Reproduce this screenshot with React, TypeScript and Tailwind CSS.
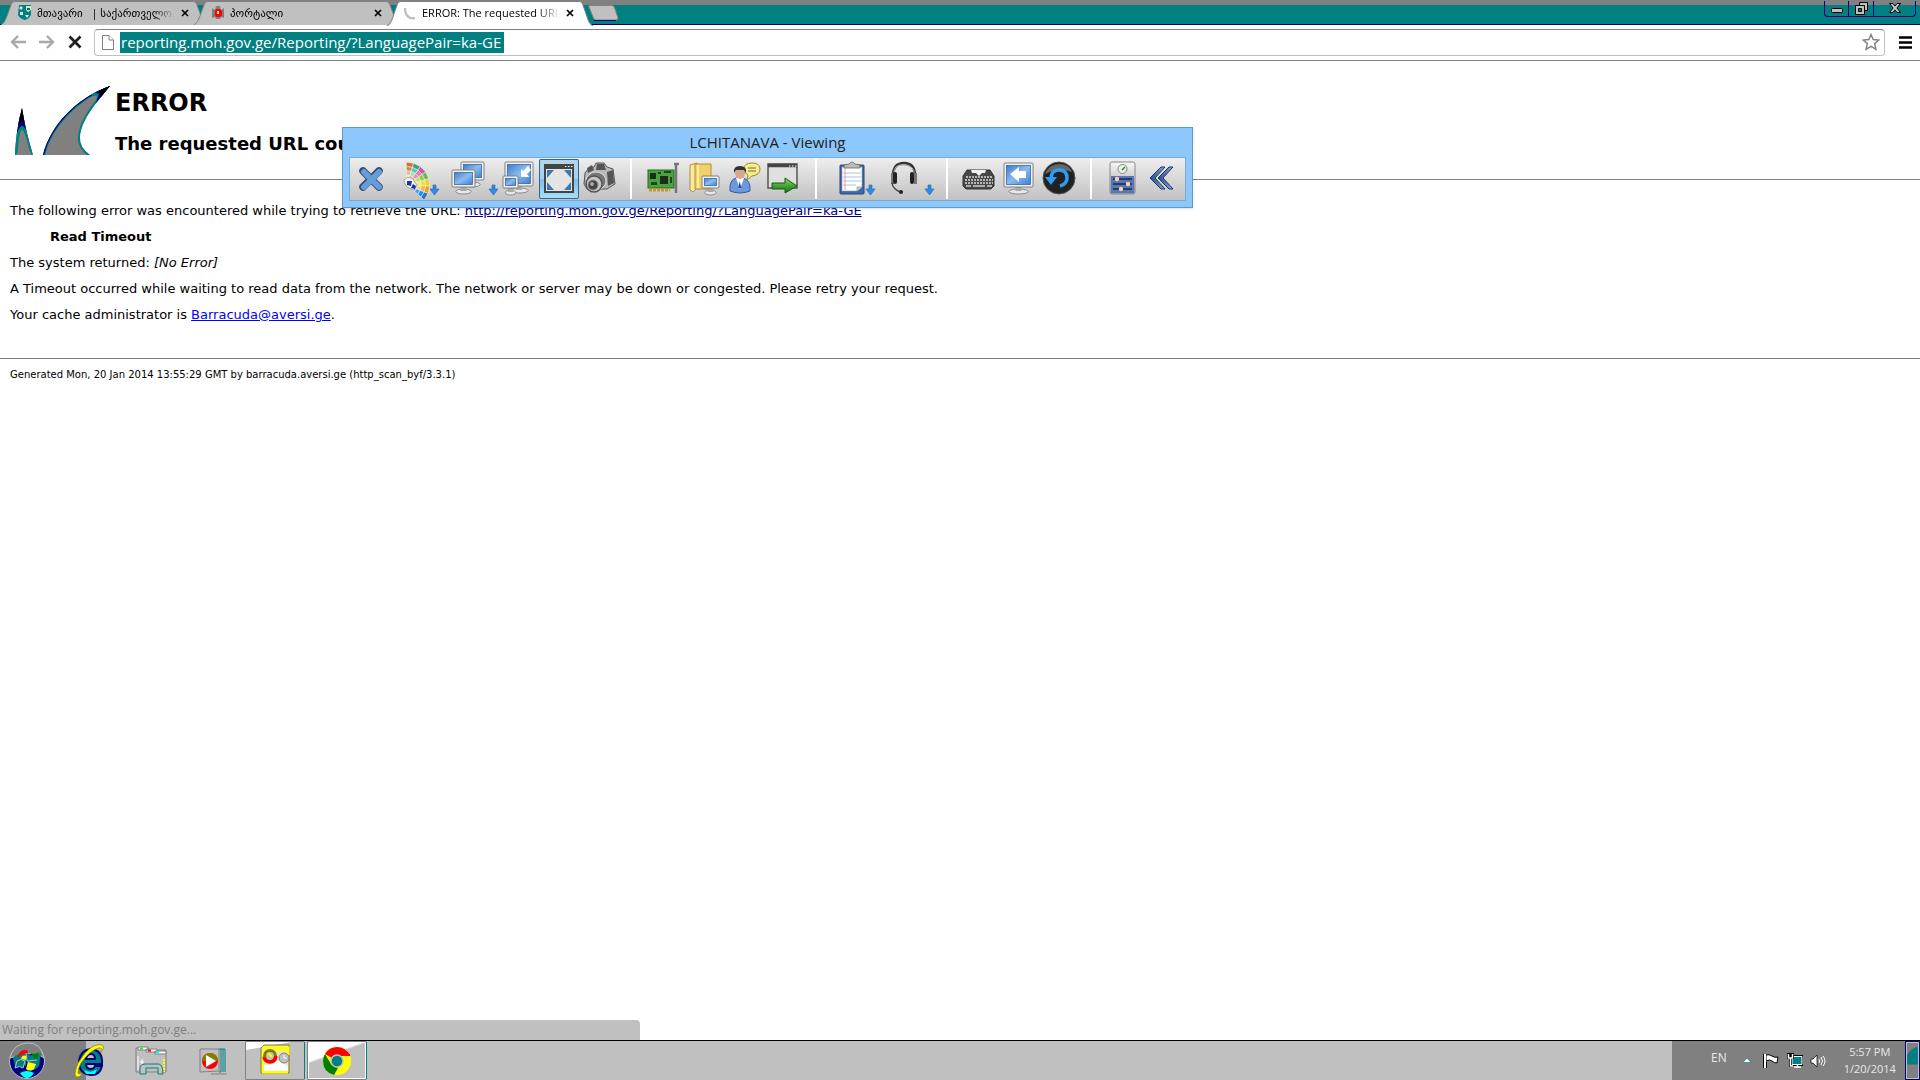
import type { ReactNode } from "react";
import clsx from "clsx";

type TabProps = {
  title: string;
  icon: ReactNode;
  active?: boolean;
};

function Tab({ title, icon, active }: TabProps) {
  const fill = active ? "#ffffff" : "#c0c0c0";

  return (
    <div className={clsx("flex h-6 shrink-0 -mr-[13px]", active && "relative h-[25px]")}>
      <svg viewBox="0 0 14 24" preserveAspectRatio="none" className="h-full w-3.5" aria-hidden="true">
        <path d="M0 24Q4 22 6 15L10 4Q11 0 14 0V24Z" fill={fill} />
        <path d="M0 24Q4 22 6 15L10 4Q11 0.5 14 0.5" fill="none" stroke="#808080" />
      </svg>
      <div
        className={clsx(
          "flex w-[178px] items-center border-t border-[#808080] pb-0.5 pl-[3px]",
          active ? "bg-white" : "bg-[#c0c0c0]"
        )}
      >
        {icon}
        <button
          type="button"
          className={clsx(
            "h-5 w-[138px] text-left text-[11px] leading-5 whitespace-pre [mask-image:linear-gradient(to_right,black_84%,transparent)]",
            active ? "ml-0.5" : "ml-[5px]"
          )}
        >
          {title}
        </button>
        <button type="button" aria-label="Close tab" className="ml-1.5">
          <svg viewBox="0 0 8 8" className="size-2" stroke="black" strokeWidth="1.7">
            <path d="M1 1L7 7M7 1L1 7" />
          </svg>
        </button>
      </div>
      <svg viewBox="0 0 14 24" preserveAspectRatio="none" className="h-full w-3.5" aria-hidden="true">
        <path d="M0 0Q3 0 4 4L8 15Q10 22 14 24H0Z" fill={fill} />
        <path d="M0 0.5Q3 0.5 4 4L8 15Q10 22 14 24" fill="none" stroke="#808080" />
      </svg>
    </div>
  );
}

function WindowButtons() {
  return (
    <div className="mr-1 ml-auto flex h-4 rounded-b border border-t-0 border-[#000080]">
      <button type="button" aria-label="Minimize" className="flex w-6 justify-center border-r border-[#000080] pt-[7px]">
        <svg viewBox="0 0 12 5" className="h-[5px] w-3">
          <rect x="0.5" y="0.5" width="11" height="4" rx="1" fill="#c0c0c0" stroke="black" />
        </svg>
      </button>
      <button type="button" aria-label="Restore" className="flex w-[25px] justify-center border-r border-[#000080] pt-px">
        <svg viewBox="0 0 13 13" className="size-[13px]" fill="#c0c0c0" stroke="black">
          <path d="M4.5 0.5H12.5V8.5H4.5Z" />
          <path d="M0.5 3.5H9.5V12.5H0.5Z" />
          <path d="M3.5 6.5H6.5V9.5H3.5Z" fill="#008080" />
        </svg>
      </button>
      <button type="button" aria-label="Close" className="flex w-[41px] justify-center pt-0.5">
        <svg viewBox="0 0 12 10" className="h-2.5 w-3">
          <path d="M0.5 0.5H4L6 3L8 0.5H11.5L8 5L11.5 9.5H8L6 7L4 9.5H0.5L4 5Z" fill="#c0c0c0" stroke="black" />
        </svg>
      </button>
    </div>
  );
}

function TabStrip() {
  return (
    <div className="flex h-[25px] border-b border-[#000080] bg-[linear-gradient(#808080_5px,#008080_5px)] pt-px pl-px">
      <Tab
        title="მთავარი   | საქართველო."
        icon={
          <svg viewBox="0 0 14 15" className="h-[15px] w-3.5 shrink-0">
            <path d="M1 0H13V10Q11 14 7 15Q2 14 0 10Z" fill="#008080" />
            <path d="M3 1L5 3L3 5L1 3ZM8 1H13V5L10 7L8 5ZM2 7H5V10H2ZM7 10H11L9 13Z" fill="#e0e0e0" />
            <path d="M9 3H12V5H9Z" fill="#008000" />
          </svg>
        }
      />
      <Tab
        title="პორტალი"
        icon={
          <svg viewBox="0 0 14 14" className="size-3.5 shrink-0">
            <path d="M1 2L4 4L5 0H9L10 4L13 2V12L10 11L9 13H5L4 11L1 12Z" fill="#808080" />
            <path d="M2 4L4 6M12 4L10 6M2 10L4 9M12 10L10 9" stroke="#808000" />
            <path d="M5 3H9L11 5V9L9 11H5L4 9V5Z" fill="red" />
            <path d="M6 5H8V8H6Z" fill="#e0e0e0" />
          </svg>
        }
      />
      <Tab
        active
        title="ERROR: The requested URI"
        icon={
          <svg viewBox="0 0 16 14" className="h-3.5 w-4 shrink-0" fill="none" stroke="#c0c0c0" strokeWidth="2.4">
            <path d="M1 2Q1 8 4 10.500T11 12" />
          </svg>
        }
      />
      <button type="button" aria-label="New tab" className="ml-2 self-start pt-1">
        <svg viewBox="0 0 31 16" className="h-4 w-[31px]">
          <path d="M1 0.5H24Q26 0.5 27 4L30 13Q30 15 28 15H8Q6 15 5 12L1 2Z" fill="#c0c0c0" stroke="#808080" />
          <path d="M6 15.5H28" stroke="#000080" />
        </svg>
      </button>
      <WindowButtons />
    </div>
  );
}

function AddressBar() {
  return (
    <div className="flex h-9 items-center border-b border-[#808080] bg-white pr-2 pb-px pl-2">
      <button type="button" aria-label="Back" className="w-[30px] pl-0.5">
        <svg viewBox="0 0 16 14" className="h-3.5 w-4" fill="none" stroke="#a8a8a8" strokeWidth="2.4">
          <path d="M8 1L2 7L8 13M2 7H16" />
        </svg>
      </button>
      <button type="button" aria-label="Forward" className="w-[30px] pl-px">
        <svg viewBox="0 0 16 14" className="h-3.5 w-4" fill="none" stroke="#a8a8a8" strokeWidth="2.4">
          <path d="M8 1L14 7L8 13M14 7H0" />
        </svg>
      </button>
      <button type="button" aria-label="Stop" className="w-[26px]">
        <svg viewBox="0 0 14 14" className="size-3.5" stroke="#202020" strokeWidth="2.8">
          <path d="M1.5 1.5L12.5 12.5M12.5 1.5L1.5 12.5" />
        </svg>
      </button>
      <div className="flex h-[27px] flex-1 items-center rounded-sm border border-[#c0c0c0] border-t-[#808080] pr-1 pl-[7px]">
        <svg viewBox="0 0 12 15" className="mr-1.5 h-[15px] w-3" fill="white" stroke="#808080">
          <path d="M0.5 0.5H7L11.5 5V14.5H0.5Z" />
          <path d="M7 0.5V5H11.5" />
        </svg>
        <input
          aria-label="Address"
          defaultValue="reporting.moh.gov.ge/Reporting/?LanguagePair=ka-GE"
          className="h-[21px] w-96 bg-[#008080] px-px text-[15px] leading-5 text-white outline-none"
        />
        <button type="button" aria-label="Bookmark this page" className="ml-auto">
          <svg viewBox="0 0 18 18" className="size-[18px]" fill="none" stroke="#808080" strokeWidth="1.4">
            <path d="M9 1.5L11.2 6.5L16.8 7L12.6 10.6L14 16.3L9 13.4L4 16.3L5.4 10.6L1.2 7L6.8 6.5Z" />
          </svg>
        </button>
      </div>
      <button type="button" aria-label="Menu" className="ml-3.5">
        <svg viewBox="0 0 13 13" className="size-[13px]" stroke="black" strokeWidth="2.6">
          <path d="M0 1.5H13M0 6.5H13M0 11.5H13" />
        </svg>
      </button>
    </div>
  );
}

function FinLogo() {
  return (
    <svg viewBox="0 0 96 70" className="h-[70px] w-24 shrink-0" aria-hidden="true">
      <defs>
        <clipPath id="small-fin">
          <path d="M1 70Q2 44 8 23Q12 48 19 70Z" />
        </clipPath>
        <clipPath id="large-fin">
          <path d="M29 70C36 41 62 13 96 1C80 20 67 36 66 52Q65 62 76 70Z" />
        </clipPath>
      </defs>
      <g clipPath="url(#small-fin)">
        <rect y="20" width="22" height="50" fill="#808080" />
        <path d="M1 70Q2 50 6 43H10Q15 53 19 70" fill="none" stroke="#008080" strokeWidth="3" />
        <path d="M0 60Q4 41 8 41T18 60V20H0Z" fill="#000080" />
        <path d="M2 68Q4 43 8 43T17 66" fill="none" stroke="#008080" strokeWidth="3" />
        <path d="M0 20H18V40L12 38L8 36L4 40H0Z" />
      </g>
      <g clipPath="url(#large-fin)">
        <path d="M20 0H96V70H20Z" fill="#808080" />
        <path d="M29 70C36 41 62 13 96 1C80 20 67 36 66 52Q65 62 76 70" fill="none" stroke="#008080" strokeWidth="4" />
        <path d="M29 70C36 41 62 13 96 1" fill="none" stroke="#000080" strokeWidth="2" />
        <path d="M76 10L83 11L81 20L96 4V0Z" fill="#008080" />
        <path d="M80 7L85 9L82 18L96 4V0Z" fill="#000080" />
        <path d="M84 5L86 11L90 14L96 4V0Z" />
      </g>
    </svg>
  );
}

function ErrorPage() {
  return (
    <main className="flex-1 bg-white font-['DejaVu_Sans',sans-serif] text-[13px] leading-[26px] text-black">
      <header className="flex gap-[5px] border-b border-[#808080] pt-6 pb-[22px] pl-3.5">
        <FinLogo />
        <div className="font-bold">
          <h1 className="text-2xl leading-9">ERROR</h1>
          <h2 className="mt-2.5 text-lg leading-[26px]">The requested URL could not be retrieved</h2>
        </div>
      </header>
      <section className="border-b border-[#808080] px-2.5 pt-[18px] pb-[30px]">
        <p>
          The following error was encountered while trying to retrieve the URL:{" "}
          <a href="#retry" className="text-[#000080] underline">
            http://reporting.moh.gov.ge/Reporting/?LanguagePair=ka-GE
          </a>
        </p>
        <p className="pl-10 font-bold">Read Timeout</p>
        <p>
          The system returned: <i>[No Error]</i>
        </p>
        <p>
          A Timeout occurred while waiting to read data from the network. The network or server may be down or congested.
          Please retry your request.
        </p>
        <p>
          Your cache administrator is{" "}
          <a href="mailto:Barracuda@aversi.ge" className="text-[#0000ff] underline">
            Barracuda@aversi.ge
          </a>
          .
        </p>
      </section>
      <footer className="px-2.5 pt-2 text-[10px] leading-4">
        Generated Mon, 20 Jan 2014 13:55:29 GMT by barracuda.aversi.ge (http_scan_byf/3.3.1)
      </footer>
    </main>
  );
}

type ToolProps = {
  label: string;
  children: ReactNode;
  selected?: boolean;
  wide?: boolean;
};

function Tool({ label, children, selected, wide }: ToolProps) {
  return (
    <button
      type="button"
      aria-label={label}
      className={clsx(
        "h-10 shrink-0",
        wide ? "w-[49px]" : "w-10",
        selected &&
          "rounded-xs bg-[linear-gradient(#b4d4ea,#a4d0ee_50%,#7dbfe8_50%,#a8e0fa)] inset-ring inset-ring-[#2f6690]"
      )}
    >
      <svg viewBox={wide ? "0 0 49 40" : "0 0 40 40"} className="size-full">
        {children}
      </svg>
    </button>
  );
}

function DownArrow({ x }: { x: number }) {
  return (
    <path
      transform={`translate(${x} 26)`}
      d="M3 0H6V4H9L4.5 10L0 4H3Z"
      fill="#2d8be8"
      stroke="#2564a8"
      strokeWidth="0.6"
    />
  );
}

function Monitor({ x, y, w, h }: { x: number; y: number; w: number; h: number }) {
  return (
    <g transform={`translate(${x} ${y})`}>
      <ellipse cx={w / 2} cy={h + 4.5} rx={w / 3} ry="2.5" fill="#e8e8e8" stroke="#777" strokeWidth="0.8" />
      <path d={`M${w / 2 - 3} ${h}h6v4h-6Z`} fill="#aaa" />
      <rect width={w} height={h} rx="1" fill="#f0f0f0" stroke="#777" strokeWidth="0.9" />
      <rect x="2.5" y="2.5" width={w - 5} height={h - 5} fill="url(#screen)" stroke="#3c68a0" strokeWidth="0.8" />
    </g>
  );
}

const swatches = [
  ["#f0e0c8", "#e8b888", "#c88848", "#d87020"],
  ["#f0b0b0", "#a0e0c8", "#60c8a8", "#38a088"],
  ["#e8b0b0", "#f09090", "#e080b0", "#c858a0"],
  ["#d0f090", "#b8e078", "#90d040", "#68b850"],
  ["#f8e878", "#fff048", "#f0e030", "#f0d020"],
  ["#fce890", "#f8d860", "#f8b840", "#f0a020"],
  ["#70c0ff", "#40a8ff", "#2090f0", "#1878d8"],
];

// one cell of the colour fan, between two radii and two angles
function wedge(ring: number, blade: number) {
  const point = (r: number, deg: number) => {
    const a = (deg * Math.PI) / 180;
    return `${(r * Math.cos(a)).toFixed(1)} ${(r * Math.sin(a)).toFixed(1)}`;
  };
  const inner = 6 + ring * 4.2;
  const outer = inner + 4.2;
  const from = -92 + blade * 19;
  const to = from + 19;
  return `M${point(inner, from)}L${point(outer, from)}L${point(outer, to)}L${point(inner, to)}Z`;
}

function ViewerToolbar() {
  return (
    <div className="flex border border-[#7aa9d3] bg-linear-to-b from-[#eeeeee] to-[#c2c2c2] py-px">
      <svg className="absolute size-0" aria-hidden="true">
        <defs>
          <linearGradient id="screen" x1="0" y1="0" x2="1" y2="1">
            <stop offset="0" stopColor="#3c7cc8" />
            <stop offset="0.5" stopColor="#8abcf0" />
            <stop offset="1" stopColor="#3c80d0" />
          </linearGradient>
          <linearGradient id="metal" x1="0" y1="0" x2="0" y2="1">
            <stop offset="0" stopColor="#f8f8f8" />
            <stop offset="1" stopColor="#a0a0a0" />
          </linearGradient>
          <linearGradient id="green" x1="0" y1="0" x2="0" y2="1">
            <stop offset="0" stopColor="#80d860" />
            <stop offset="1" stopColor="#187018" />
          </linearGradient>
          <linearGradient id="chevron" x1="0" y1="0" x2="1" y2="0">
            <stop offset="0" stopColor="#284880" />
            <stop offset="1" stopColor="#88a8d8" />
          </linearGradient>
        </defs>
      </svg>

      <div className="flex border-r-2 border-r-white pr-[11px] pl-px">
        <Tool label="Disconnect">
          <path d="M12 12L28 28M28 12L12 28" stroke="#2c4a70" strokeWidth="7.5" strokeLinecap="round" />
          <path d="M13 13L28 28M28 13L13 28" stroke="#669cd8" strokeWidth="6" strokeLinecap="round" />
        </Tool>
        <div className="mr-2 ml-[11px] flex">
          <Tool label="Colors">
            <g transform="translate(5 26)">
              {swatches.map((blade, i) =>
                blade.map((color, j) => (
                  <path key={color} d={wedge(j, i)} fill={color} stroke="#eeeeee" strokeWidth="0.6" />
                ))
              )}
              <path d="M-3 -5Q0 -9 5 -7L10 0L7 5Q-3 2 -3 -5Z" fill="#f4f4f4" stroke="#888" strokeWidth="0.7" />
              <path d="M0 -4L5 -4L4 1L0 0ZM6 -1L9 1L8 4L4 3Z" fill="#1838a0" />
            </g>
            <DownArrow x={28} />
          </Tool>
        </div>
        <Tool label="Select monitor" wide>
          <Monitor x={11} y={3} w={23} h={18} />
          <Monitor x={2} y={11} w={23} h={17} />
          <DownArrow x={39} />
        </Tool>
        <Tool label="Scale to window">
          <Monitor x={6} y={3} w={28} h={24} />
          <path d="M29 7L24 12L22 10V18H30L28 15L32 11Z" fill="white" />
          <Monitor x={4} y={17} w={15} h={12} />
        </Tool>
        <Tool label="Full screen" selected>
          <path d="M5 5H35V34H5Z" fill="#444" />
          <path d="M7 10H33V32H7Z" fill="#e4e4e4" />
          <path d="M26 7.5h1.5M29 7.5h1.5M32 7.5h1.5" stroke="white" />
          <path d="M8 11H15L8 19ZM32 11H25L32 19ZM8 31H15L8 23ZM32 31H25L32 23Z" fill="#3c78b0" />
        </Tool>
        <Tool label="Screenshot">
          <path d="M6 14L10 9L15 8L17 4H25L28 8L34 10L36 25L28 30H8L5 25Z" fill="#b8b8b8" stroke="#555" />
          <path d="M8 9L13 6L15 11L9 14ZM18 5H25L27 11H17Z" fill="#555" />
          <path d="M28 13L34 11L35 24L29 27Z" fill="#555" />
          <ellipse cx="17" cy="22" rx="10" ry="9" fill="#777" stroke="#ddd" />
          <circle cx="15" cy="25" r="8" fill="#c8c8c8" stroke="#555" strokeWidth="1.5" />
          <circle cx="14" cy="26" r="5" fill="#444" stroke="#888" />
          <circle cx="13" cy="25" r="2" fill="#aaa" />
        </Tool>
      </div>

      <div className="flex border-r-2 border-r-white pr-[11px] pl-3">
        <Tool label="System information">
          <path d="M30 5H35M32 5V34" stroke="#777" strokeWidth="2.5" />
          <rect x="4" y="11" width="26" height="18" fill="#4ca040" stroke="#286820" />
          <path d="M6 14H12V20H6ZM16 17H24V25H16Z" fill="#183018" />
          <path d="M14 13H17V15H14ZM20 12H27V14H20ZM7 23H13V26H7ZM26 18H28V24H26Z" fill="#204820" />
          <path d="M5 31H26" stroke="#c89830" strokeWidth="3" strokeDasharray="3 1" />
        </Tool>
        <Tool label="File transfer">
          <path d="M6 6L13 4V29L9 33L6 31Z" fill="#f8e8a0" stroke="#b09030" />
          <path d="M11 5H27V30H11Z" fill="#f0d068" stroke="#b09030" />
          <path d="M14 6V29" stroke="#fff0a8" strokeWidth="2" />
          <Monitor x={18} y={17} w={17} h={12} />
        </Tool>
        <Tool label="Chat">
          <path d="M20 10Q20 4 28 4T36 10T28 17L23 21L24 16Q20 14 20 10Z" fill="#f4ec90" stroke="#988c30" />
          <path d="M24 9H32M24 12H32" stroke="#807020" />
          <path d="M6 32Q5 21 12 19H19Q27 21 26 32Q16 36 6 32Z" fill="#6c98dc" stroke="#385c98" />
          <path d="M12 19L16 30L20 19Z" fill="white" />
          <path d="M15.5 22L14.5 29H17.5Z" fill="#2050a0" />
          <ellipse cx="16" cy="14" rx="5" ry="6" fill="#d8a888" />
          <path d="M10 14Q9 7 16 7T22 14L20 11H12Z" fill="#333" />
        </Tool>
        <Tool label="Run on remote">
          <rect x="4" y="5" width="29" height="24" fill="#e0e0e0" stroke="#555" strokeWidth="1.5" />
          <path d="M4 6.5H33" stroke="#444" strokeWidth="3.5" />
          <path d="M25 7h1.5M28 7h1.5M31 7h1.5" stroke="white" />
          <path d="M8 24H21V19L33 27L21 34V30H8Z" fill="url(#green)" stroke="#185818" />
        </Tool>
      </div>

      <div className="flex gap-2.5 border-r-2 border-r-white pr-[9px] pl-[21px]">
        <Tool label="Clipboard">
          <rect x="2" y="6" width="24" height="29" rx="1" fill="#3c68b0" stroke="#284878" />
          <path d="M4 8H24V28L19 32H4Z" fill="white" stroke="#999" strokeWidth="0.6" />
          <path d="M19 32V28H24" fill="#ccc" stroke="#888" strokeWidth="0.6" />
          <path d="M5 14H23M5 18H23M5 22H23M5 26H18" stroke="#a8c4ec" />
          <path d="M7 9V31" stroke="#e8a0a0" />
          <path d="M6 9V6L11 5Q14 1 17 5L22 6V9Z" fill="#bbb" stroke="#666" strokeWidth="0.8" />
          <DownArrow x={28} />
        </Tool>
        <Tool label="Audio" wide>
          <path d="M5 17Q5 4 16 4T27 17" fill="none" stroke="#333" strokeWidth="2.5" />
          <path d="M6 15Q5 5 16 6T26 15" fill="none" stroke="#aaa" />
          <path d="M3 14H6V25H3ZM26 14H29V25H26Z" fill="#777" />
          <rect x="5" y="13" width="4" height="12" rx="2" fill="#222" />
          <rect x="22" y="13" width="4" height="12" rx="2" fill="#222" />
          <path d="M4 24Q5 30 12 33" fill="none" stroke="#444" strokeWidth="1.5" />
          <circle cx="13" cy="33" r="2" fill="#222" />
          <DownArrow x={37} />
        </Tool>
      </div>

      <div className="flex border-r-2 border-r-white px-[11px]">
        <Tool label="Keyboard">
          <path d="M8 11H31L35 17V27L32 30H7L4 27V17Z" fill="#484848" stroke="#333" />
          <path d="M12 11H27L26 14H23L20 17L17 14H13Z" fill="#f0f0f0" />
          <path d="M7 18H33M6 21H34M6 24H34" stroke="#d8d8d8" strokeWidth="1.7" strokeDasharray="2 1" />
          <path d="M7 27H12M14 27H26M28 27H33" stroke="#ccc" strokeWidth="1.5" />
        </Tool>
        <Tool label="Switch sides">
          <Monitor x={5} y={4} w={29} h={24} />
          <path d="M11 15L20 8V12H27V19H20V23Z" fill="white" />
        </Tool>
        <Tool label="Reboot">
          <circle cx="20" cy="19" r="16" fill="#222" stroke="#555" />
          <path d="M6 15Q10 5 20 5T33 13Q20 8 6 15Z" fill="#666" />
          <path d="M12 20Q12 11 20 11Q28 11 28 19Q28 25 21 27" fill="none" stroke="#2d9cf4" strokeWidth="3.5" />
          <path d="M6 18H18L12 26Z" fill="#2d9cf4" />
        </Tool>
      </div>

      <div className="flex pr-0.5 pl-[11px]">
        <Tool label="Settings">
          <rect x="7" y="3" width="25" height="32" rx="2" fill="url(#metal)" stroke="#888" />
          <circle cx="19.5" cy="10" r="4.5" fill="#e8f0e8" stroke="#888" />
          <path d="M19 11L22 8" stroke="#209040" strokeWidth="1.5" />
          <rect x="8" y="17" width="23" height="17" fill="#5478b8" />
          <path d="M10 20H29M10 25H29M10 30H29" stroke="#182848" strokeWidth="1.5" />
          <circle cx="14" cy="20" r="2.2" fill="#ffd0a0" />
          <circle cx="25" cy="25" r="2.2" fill="#ffd0a0" />
          <circle cx="18" cy="30" r="2.2" fill="#ffd0a0" />
        </Tool>
        <Tool label="Collapse toolbar">
          <path d="M18 8L7 19L18 30H22L12 19L22 8Z" fill="url(#chevron)" stroke="#203868" />
          <path d="M26 8L15 19L26 30H30L20 19L30 8Z" fill="url(#chevron)" stroke="#203868" />
        </Tool>
      </div>
    </div>
  );
}

function ViewerWindow() {
  return (
    <section className="absolute top-[127px] left-[342px] border border-[#6696c4] bg-[#8cc8fc] px-1.5 pb-1.5 shadow-sm">
      <h2 className="h-[29px] text-center text-[15px] leading-[29px] text-[#222222]">LCHITANAVA - Viewing</h2>
      <ViewerToolbar />
    </section>
  );
}

function Taskbar() {
  return (
    <nav className="flex h-10 border-t border-black bg-[#c0c0c0]">
      <div className="flex w-[86px] items-center bg-[#808080] pl-2">
        <button type="button" aria-label="Start">
          <svg viewBox="0 0 38 38" className="size-[38px]">
            <circle cx="19" cy="19" r="17.5" fill="#000080" stroke="#c0c0c0" />
            <path d="M2 16Q5 2 19 1T36 16Q28 10 19 12T2 16Z" fill="#808080" stroke="#c0c0c0" />
            <path d="M5 16Q10 10 19 12L18 24Q10 20 7 24ZM20 13Q28 14 33 11L31 24Q26 30 19 28Z" fill="#008080" />
            <path d="M10 13Q14 6 20 9L19 13Q14 10 9 17Z" fill="red" />
            <path d="M22 10Q26 13 31 10L29 17Q27 20 25 14Z" fill="#008000" />
            <path d="M13 17Q14 12 19 14L18 18ZM20 20L28 22L26 27Q22 30 18 27Z" fill="yellow" />
            <path d="M9 19Q13 16 17 19L15 26Q12 23 7 26ZM18 11L19 19L29 18" fill="#008080" stroke="#c0c0c0" />
            <path d="M12 31Q19 27 26 31Q23 36 19 36T12 31Z" fill="cyan" />
          </svg>
        </button>
        <button type="button" aria-label="Internet Explorer" className="ml-[26px] shrink-0">
          <svg viewBox="0 0 34 34" className="size-[34px]">
            <path
              d="M30 20H14Q14 25 19 25Q22 25 23 22H30Q28 31 19 31Q7 30 7 18Q8 6 19 5Q31 6 30 20ZM14 15H23Q23 10 19 10T14 15Z"
              fill="#008080"
              stroke="#000080"
              strokeWidth="2"
              fillRule="evenodd"
            />
            <path d="M12 26Q19 30 25 25L23 30H14Z" fill="cyan" />
            <path
              d="M6 19Q0 34 6 33Q8 33 11 29Q8 31 6 29Q6 25 9 19Q18 6 27 4Q31 3 28 9Q34 3 30 1Q22 -1 13 9Z"
              fill="yellow"
              stroke="#808000"
              strokeWidth="0.7"
            />
          </svg>
        </button>
      </div>

      <div className="flex flex-1 items-center">
        <button type="button" aria-label="Explorer" className="ml-[49px]">
          <svg viewBox="0 0 33 31" className="h-[31px] w-[33px]" stroke="#808080">
            <path d="M1 3H12L14 5H31V27H1Z" fill="#c0c0c0" />
            <path d="M3 2H13V5H3ZM11 4H22V7H11ZM20 6H31V9H20Z" fill="white" />
            <path d="M5 3.5h3" stroke="#00ff00" strokeWidth="2" />
            <path d="M13 5.5h3" stroke="red" strokeWidth="2" />
            <path d="M21 7.5h3" stroke="cyan" strokeWidth="2" />
            <path d="M3 11V25M5 17H9M7 14V20" stroke="white" />
            <path d="M29 14V27" stroke="yellow" strokeWidth="2" strokeDasharray="2 1" />
            <path d="M5 29V22Q6 19 10 19H24Q28 20 28 29H23V23H11V29Z" fill="#c0c0c0" stroke="#008080" />
          </svg>
        </button>
        <button type="button" aria-label="Media Player" className="ml-[31px]">
          <svg viewBox="0 0 29 28" className="h-7 w-[29px]">
            <path d="M1 2H20V24L1 25Z" fill="#c0c0c0" stroke="#808080" />
            <path d="M20 2H22V25H20M22 2H24V25M24 2H26V25" fill="none" stroke="#008080" />
            <circle cx="11" cy="14" r="8" fill="red" />
            <path d="M3 14Q4 6 11 6T19 14Z" fill="#808000" />
            <path d="M7 8L17 14L7 20Z" fill="white" />
            <path d="M12 27H28" stroke="#808080" />
          </svg>
        </button>
        <button
          type="button"
          aria-label="Outlook"
          className="ml-[17px] flex h-[39px] w-[60px] justify-center rounded-xs border border-[#808080] border-r-[#008080] bg-[linear-gradient(170deg,#fff_16%,#c0c0c0_18%)] pt-0.5"
        >
          <svg viewBox="0 0 30 31" className="h-[31px] w-[30px]">
            <path d="M1 4L4 1H29V29H1Z" fill="#e8e8c0" stroke="#808000" />
            <path d="M2 4H28V11M2 28H28" fill="none" stroke="yellow" strokeWidth="3" />
            <path d="M3 8V26M16 7L27 5" stroke="yellow" strokeWidth="2" />
            <path d="M4 21L13 20L18 16L28 22V27H4Z" fill="white" />
            <circle cx="10" cy="12" r="5.5" fill="#c0c0c0" stroke="#808000" strokeWidth="3" />
            <path d="M4 13Q5 18 10 18T16 12" fill="none" stroke="red" strokeWidth="3.5" />
            <path d="M8 9L12 13" stroke="yellow" strokeWidth="2" />
            <circle cx="24" cy="14" r="5" fill="#c0c0c0" stroke="#808080" />
            <path d="M24 11V14H27" fill="none" stroke="white" />
          </svg>
        </button>
        <button
          type="button"
          aria-label="Chrome"
          className="ml-0.5 flex h-[39px] w-[60px] justify-center rounded-xs border border-[#808080] border-r-[#008080] bg-[linear-gradient(160deg,#fff_34%,#c0c0c0_38%)] pt-1 inset-ring inset-ring-white"
        >
          <svg viewBox="0 0 30 30" className="size-[30px]">
            <circle cx="15" cy="15" r="14" fill="yellow" />
            <path d="M15 15L3 8Q7 1 15 1T28 9H15Z" fill="red" />
            <path d="M3 8L9 18L16 22L12 29Q1 26 1 15Q1 11 3 8Z" fill="#008000" />
            <path d="M28 9H15" stroke="red" strokeWidth="2" />
            <circle cx="15" cy="15" r="6" fill="#008080" stroke="#c0c0c0" strokeWidth="1.6" />
          </svg>
        </button>
      </div>

      <div className="flex w-[233px] items-center bg-[#808080] text-[11px] text-[#e8e8e8]">
        <button type="button" className="ml-[39px] pb-1.5 text-xs">
          EN
        </button>
        <button type="button" aria-label="Show hidden icons" className="ml-[15px]">
          <svg viewBox="0 0 10 5" className="h-[5px] w-2.5">
            <path d="M5 0L9 4.5H1Z" fill="white" stroke="#008080" strokeWidth="0.6" />
          </svg>
        </button>
        <button type="button" aria-label="Action center" className="ml-[11px]">
          <svg viewBox="0 0 17 16" className="h-4 w-[17px]">
            <path d="M3 2Q6 1 9 3T15 4L14 10Q11 10 9 8T3 8Z" fill="white" stroke="black" />
            <path d="M2 1V15" stroke="white" strokeWidth="2" />
            <path d="M3.5 9V15M0.5 1V15" stroke="black" />
          </svg>
        </button>
        <button type="button" aria-label="Network" className="ml-[7px]">
          <svg viewBox="0 0 16 15" className="h-[15px] w-4">
            <path d="M4 2H16V13H4Z" />
            <path d="M5 3.5H15V11.5H5Z" fill="#008080" stroke="white" />
            <path d="M7 14H14M10.5 12V14" stroke="white" strokeWidth="1.5" />
            <path d="M0 0H7V6H5V14H2V6H0Z" />
            <path d="M1.5 1V5H5.5V1M3.5 5V13H6" fill="none" stroke="white" strokeWidth="1.5" />
          </svg>
        </button>
        <button type="button" aria-label="Volume" className="ml-[7px]">
          <svg viewBox="0 0 17 14" className="h-3.5 w-[17px]">
            <path d="M1 5H3L7 1V13L3 9H1Z" fill="white" stroke="black" strokeWidth="0.7" />
            <path d="M9 5Q10 7 9 9M11 3Q14 7 11 11M13 2Q17 7 13 12" fill="none" stroke="white" />
          </svg>
        </button>
        <button type="button" className="ml-[17px] pb-px text-center leading-[17px]">
          5:57 PM
          <br />
          1/20/2014
        </button>
      </div>
      <button
        type="button"
        aria-label="Show desktop"
        className="w-[15px] border border-[#000080] bg-[#808080] inset-ring inset-ring-[#c0c0c0]"
      >
        <svg viewBox="0 0 13 38" className="size-full">
          <path d="M1 13Q6 6 12 5V23H1Z" fill="#008080" />
        </svg>
      </button>
    </nav>
  );
}

export default function App() {
  return (
    <div className="relative flex min-h-screen flex-col overflow-hidden bg-white font-['Open_Sans','DejaVu_Sans',sans-serif] text-black">
      <TabStrip />
      <AddressBar />
      <ErrorPage />
      <div role="status" className="h-5 w-1/3 rounded-tr bg-[#c0c0c0] pl-0.5 text-xs leading-5 text-[#808080]">
        Waiting for reporting.moh.gov.ge...
      </div>
      <Taskbar />
      <ViewerWindow />
    </div>
  );
}
